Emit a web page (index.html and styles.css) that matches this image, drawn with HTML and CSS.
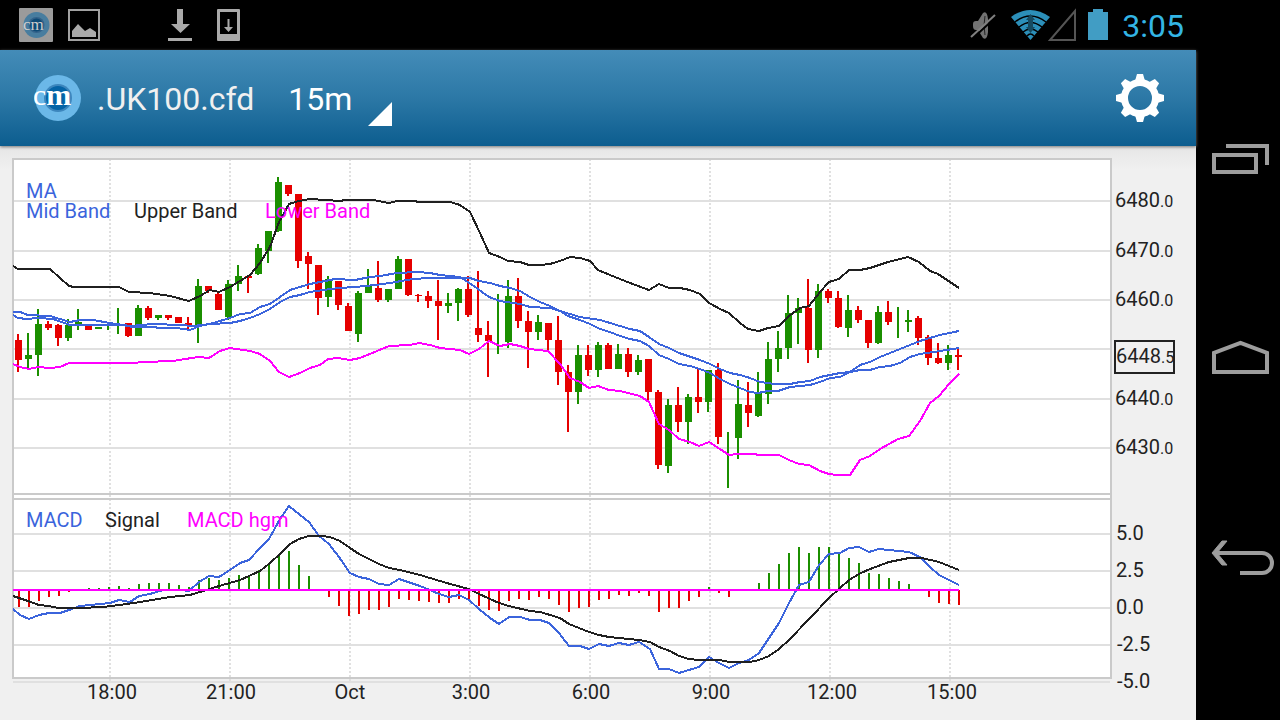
FILE: index.html
```html
<!DOCTYPE html>
<html lang="en">
<head>
<meta charset="utf-8">
<title>.UK100.cfd 15m</title>
<link rel="stylesheet" href="styles.css">
</head>
<body>
<div class="device">
  <div class="screen">
    <div class="status">
      <svg class="icon" viewBox="0 0 36 50" aria-hidden="true">
        <rect x="1" y="8" width="34" height="34" rx="1" fill="#9b9b9b"/>
        <circle cx="18.500" cy="25" r="13" fill="#487d9f"/>
        <circle cx="18.500" cy="25" r="8" fill="#33628a"/>
        <circle cx="18.500" cy="25" r="6.500" fill="#0d4a76"/>
        <text class="logo-small" x="5" y="30">cm</text>
      </svg>
      <svg class="icon" viewBox="0 0 36 50" aria-hidden="true">
        <rect x="3" y="10" width="30" height="30" fill="none" stroke="#a2a2a2" stroke-width="2"/>
        <path d="M6 37V31L12 24L19 31L24 28L30 32V37Z" fill="#aaa"/>
      </svg>
      <svg class="icon icon-after-gap" viewBox="0 0 36 50" aria-hidden="true">
        <path d="M15 9H21V24H28L18.500 33L9 24H15ZM6 38H30V41H6Z" fill="#aaa"/>
      </svg>
      <svg class="icon" viewBox="0 0 36 50" aria-hidden="true">
        <path fill-rule="evenodd" d="M8 9H29Q30 9 30 10V40Q30 41 29 41H8Q7 41 7 40V10Q7 9 8 9ZM10 12V34H27V12Z" fill="#aaa"/>
        <path d="M17.500 19H19.500V27H23L18.500 32L14 27H17.500Z" fill="#aaa"/>
      </svg>
      <div class="status-end">
        <svg class="icon" viewBox="0 0 36 50" aria-hidden="true">
          <path d="M7 24Q7 21 10 21H12L17 13Q21 10 22 19V32Q21 41 17 38L12 30H10Q7 30 7 26Z" fill="#727272"/>
          <path d="M19 16Q17 25 19 35" fill="none" stroke="#222" stroke-width="1"/>
          <path d="M6 39L30 17" stroke="#000" stroke-width="2"/>
          <path d="M5 37L29 15" stroke="#808080" stroke-width="2"/>
        </svg>
        <svg class="icon-wide" viewBox="0 0 72 50" aria-hidden="true">
          <path d="M3 17Q22 3 42 17L22.500 40Z" fill="#2c8fb9"/>
          <path d="M7 22Q22.500 10 38 22M11 27Q22.500 18 34 27M15 32Q22.500 26 30 32M19 36Q22.500 32 26 36" fill="none" stroke="#000" stroke-width="1.500"/>
          <path d="M22.500 14L27 20H25V27H27L22.500 33L18 27H20V20H18Z" fill="#164a60"/>
          <path d="M42 40H67V11Z" fill="none" stroke="#555" stroke-width="2"/>
        </svg>
        <svg class="icon-slim" viewBox="0 0 24 50" aria-hidden="true">
          <path d="M7 9H17V12H22V40H2V12H7Z" fill="#419dc4"/>
        </svg>
        <span class="clock">3:05</span>
      </div>
    </div>
    <header class="bar">
      <svg class="logo" viewBox="0 0 48 48" aria-hidden="true">
        <circle cx="24" cy="24" r="23" fill="#6bb8e8"/>
        <circle cx="24" cy="24" r="14" fill="#3c86bd"/>
        <circle cx="24" cy="24" r="12" fill="#0564a6"/>
        <text class="logo-large" x="-1" y="31">c<tspan class="logo-bold">m</tspan></text>
      </svg>
      <h1 class="symbol">.UK100.cfd</h1>
      <label class="interval">
        <select class="interval-select" aria-label="Interval"><option>15m</option><option>30m</option><option>1h</option></select>
        <svg class="corner" viewBox="0 0 24 24" aria-hidden="true"><path d="M0 24L24 0V24Z" fill="#fff"/></svg>
      </label>
      <button class="settings" aria-label="Settings">
        <svg class="gear" viewBox="-24 -24 48 48" aria-hidden="true">
          <circle r="15.500" fill="none" stroke="#fff" stroke-width="7"/>
          <g id="teeth" fill="#fff"></g>
        </svg>
      </button>
    </header>
    <main class="content">
      <svg class="chart" viewBox="0 146 1196 574" preserveAspectRatio="xMinYMin meet" role="img" aria-label="UK100 price chart with MACD">
        <rect x="13" y="159" width="1098" height="519" fill="#fff"/>
        <g id="grid" class="grid"></g>
        <path class="frame" d="M13 159H1111V678H13ZM13 494H1111M13 499H1111"/>
        <g id="candles" class="crisp"></g>
        <g id="histogram" class="crisp"></g>
        <g id="lines" class="lines"></g>
        <g class="labels">
          <text class="blue" x="26" y="198">MA</text>
          <text class="blue" x="26" y="218">Mid Band</text>
          <text x="134" y="218">Upper Band</text>
          <text class="pink" x="265" y="218">Lower Band</text>
          <text class="blue" x="26" y="527">MACD</text>
          <text x="105" y="527">Signal</text>
          <text class="pink" x="187" y="527">MACD hgm</text>
          <text x="1115" y="207">6480<tspan class="minor">.0</tspan></text>
          <text x="1115" y="257">6470<tspan class="minor">.0</tspan></text>
          <text x="1115" y="306">6460<tspan class="minor">.0</tspan></text>
          <text x="1115" y="405">6440<tspan class="minor">.0</tspan></text>
          <text x="1115" y="454">6430<tspan class="minor">.0</tspan></text>
          <rect class="price" x="1115" y="341" width="59" height="32"/>
          <text x="1116" y="363">6448<tspan class="minor">.5</tspan></text>
          <text x="1116" y="540">5.0</text>
          <text x="1116" y="577">2.5</text>
          <text x="1116" y="614">0.0</text>
          <text x="1117" y="651">-2.5</text>
          <text x="1117" y="688">-5.0</text>
        </g>
        <g class="labels times">
          <text x="112" y="699">18:00</text>
          <text x="231" y="699">21:00</text>
          <text x="350" y="699">Oct</text>
          <text x="471" y="699">3:00</text>
          <text x="591" y="699">6:00</text>
          <text x="711" y="699">9:00</text>
          <text x="832" y="699">12:00</text>
          <text x="952" y="699">15:00</text>
        </g>
      </svg>
    </main>
  </div>
  <nav class="nav" aria-label="System">
    <button class="nav-button" aria-label="Recent apps">
      <svg class="nav-icon" viewBox="0 0 84 60" aria-hidden="true"><path d="M18 25H60V42H18ZM30 16H71V35" fill="none" stroke="#9d9d9d" stroke-width="4"/></svg>
    </button>
    <button class="nav-button" aria-label="Home">
      <svg class="nav-icon" viewBox="0 0 84 60" aria-hidden="true"><path d="M18 44V25L44.500 15L71 25V44Z" fill="none" stroke="#9d9d9d" stroke-width="4"/></svg>
    </button>
    <button class="nav-button" aria-label="Back">
      <svg class="nav-icon" viewBox="0 0 84 60" aria-hidden="true"><path d="M19 27H66A10 10 0 0 1 66 47H44" fill="none" stroke="#9d9d9d" stroke-width="4"/><path d="M26 15H31L21 27L31 39H26L16 27Z" fill="#9d9d9d" stroke="#9d9d9d"/></svg>
    </button>
  </nav>
</div>
<script src="chart.js"></script>
</body>
</html>
```
FILE: styles.css
```css
* { box-sizing: border-box; }
body { margin: 0; background: #000; font-family: Roboto, "Liberation Sans", sans-serif; }
button { border: 0; padding: 0; background: none; }
svg { display: block; }

.device { display: flex; min-height: 100vh; background: #000; }
.screen { flex: 1; min-width: 0; display: flex; flex-direction: column; }

.status { display: flex; align-items: center; gap: 12px; height: 50px; padding: 0 12px 0 18px; }
.icon { width: 36px; height: 50px; }
.icon-after-gap { margin-left: 48px; }
.icon-wide { width: 72px; height: 50px; }
.icon-slim { width: 24px; height: 50px; }
.status-end { display: flex; align-items: center; gap: 6px; margin-left: auto; }
.clock { margin-left: 6px; padding-top: 2px; font-size: 32px; line-height: 48px; color: #33b5e5; }
.logo-small { font: 17px "Liberation Serif", serif; fill: #ccc; }

.bar {
  position: relative;
  display: flex;
  align-items: center;
  height: 96px;
  padding: 0 32px 0 34px;
  background: linear-gradient(#448cb8, #2c78a6 50%, #0c5d8f);
  box-shadow: 0 1px 3px #777;
}
.logo { width: 48px; height: 48px; overflow: hidden; }
.logo-large { font: 30px "Liberation Serif", serif; fill: #fff; }
.logo-bold { font-weight: 700; }
.symbol { margin: 0 0 0 15px; padding-top: 2px; font-size: 32px; font-weight: 400; line-height: 48px; color: #f0f0f0; }
.interval { display: flex; align-items: center; margin-left: 34px; }
.interval-select {
  width: 80px;
  height: 50px;
  padding: 2px 0 0;
  border: 0;
  appearance: none;
  background: none;
  font: 32px Roboto, "Liberation Sans", sans-serif;
  color: #fff;
}
.corner { width: 24px; height: 24px; margin-top: 32px; }
.settings { margin-left: auto; }
.gear { width: 48px; height: 48px; }

.content { flex: 1; background: linear-gradient(#e6e6e6, #f0f0f0 24px); }
.chart { width: 100%; height: auto; }
.grid { stroke: #e0e0e0; stroke-width: 2; shape-rendering: crispEdges; }
.dotted { stroke-dasharray: 2 2; }
.frame { fill: none; stroke: #cacaca; stroke-width: 2; shape-rendering: crispEdges; }
.crisp { shape-rendering: crispEdges; }
.lines { fill: none; stroke-width: 2; shape-rendering: crispEdges; }
.up { fill: #1b8f00; }
.down { fill: #e60000; }
.line-blue { stroke: #3b64dc; }
.line-black { stroke: #202020; }
.line-pink { stroke: #f0f; }
.labels { font-size: 20px; fill: #222; }
.minor { font-size: 16px; }
.times { text-anchor: middle; }
.blue { fill: #3b64dc; }
.pink { fill: #f0f; }
.price { fill: #f0f0f0; stroke: #222; stroke-width: 2; }

.nav { display: flex; flex-direction: column; width: 84px; padding: 61px 0 65px; }
.nav-button { flex: 1; display: flex; align-items: center; }
.nav-icon { width: 84px; height: 60px; }
```
FILE: chart.js
```js
const NS = "http://www.w3.org/2000/svg";
const byId = (id) => document.getElementById(id);

function add(parent, tag, attrs) {
  const node = document.createElementNS(NS, tag);
  for (const key in attrs) node.setAttribute(key, attrs[key]);
  parent.appendChild(node);
}

// Gear teeth
for (let a = 0; a < 360; a += 45) {
  add(byId("teeth"), "path", { d: "M-5 -17L-3 -24H3L5 -17Z", transform: `rotate(${a})` });
}

// Grid
for (const y of [201, 251, 300, 349, 399, 448, 534, 571, 608, 645, 682]) {
  add(byId("grid"), "path", { d: `M13 ${y}H1110` });
}
for (let x = 110; x <= 950; x += 120) {
  add(byId("grid"), "path", { d: `M${x} 159V682`, class: "dotted" });
}

// Candles: direction, wick top, body top, body bottom, wick bottom
const candles = `r 334 340 360 372;g 333 355 359 369;g 309 324 355 376;r 321 324 328 330;r 324 325 338 346;
g 319 325 338 341;g 309 322 325 330;r 326 326 330 330;g 327 327 329 329;g 324 0 0 330;g 308 0 0 334;
r 323 323 336 337;g 305 308 336 336;r 306 308 318 320;g 315 315 318 320;r 315 315 318 320;r 317 317 323 323;
r 317 323 326 329;g 279 286 325 343;r 286 286 291 293;r 293 294 310 310;g 280 284 317 320;g 265 276 284 291;
r 275 276 278 293;g 244 248 274 275;g 231 231 251 263;g 177 182 231 232;r 185 185 194 196;r 194 194 261 268;
r 252 256 264 289;r 265 265 298 315;g 276 279 297 307;r 281 281 305 310;r 303 306 331 331;g 291 293 334 342;
g 269 286 293 293;r 261 288 300 302;g 289 289 300 302;g 256 259 289 289;r 259 259 295 296;r 294 295 296 302;
r 291 296 301 308;r 280 301 306 340;g 293 303 306 313;g 288 289 303 321;r 276 289 315 317;r 271 328 335 342;
r 321 335 341 377;g 294 0 0 354;g 280 296 342 348;r 278 296 321 328;r 311 321 332 368;g 315 322 332 340;
r 323 323 340 352;r 316 340 372 385;r 365 372 392 432;g 345 355 392 404;r 345 355 370 376;g 342 345 370 377;
r 343 345 369 369;g 344 354 369 369;r 348 354 372 377;g 355 360 372 375;r 359 359 392 402;r 390 392 465 469;
g 399 405 466 473;r 387 405 422 432;g 394 397 422 444;r 369 397 402 413;g 370 370 402 412;r 363 370 437 444;
g 432 0 0 488;g 380 404 438 459;r 382 405 413 427;g 372 393 416 417;g 342 359 394 404;g 331 348 359 372;
g 295 313 348 359;g 298 308 313 344;r 279 308 350 363;g 284 291 350 358;r 289 291 298 303;r 291 298 327 328;
g 295 310 328 337;r 306 310 320 323;r 320 320 343 348;g 306 312 343 344;r 301 312 322 325;g 307 0 0 338;
g 310 320 322 332;r 316 318 338 345;r 335 337 358 365;r 343 358 363 364;g 345 355 363 370;r 348 355 357 370`;

candles.split(";").forEach((row, i) => {
  const [dir, ...v] = row.trim().split(" ");
  const [high, top, bottom, low] = v.map(Number);
  const x = 18 + i * 10;
  const cls = dir === "g" ? "up" : "down";
  add(byId("candles"), "rect", { class: cls, x: x - 1, y: high, width: 2, height: low - high });
  if (bottom) add(byId("candles"), "rect", { class: cls, x: x - 3, y: top, width: 7, height: bottom - top });
});

// MACD histogram: end of each bar, baseline at 590
const bars = [607, 607, 601, 597, 596, 592, 0, 588, 588, 587, 586, 588, 584, 583, 583, 583, 585, 587, 580, 578, 580,
  578, 575, 576, 570, 565, 554, 551, 565, 576, 0, 597, 606, 616, 614, 610, 610, 607, 599, 600, 601, 602, 603, 603,
  599, 601, 606, 610, 611, 601, 599, 600, 597, 599, 605, 612, 608, 607, 600, 599, 595, 596, 593, 596, 612, 608,
  608, 601, 597, 587, 593, 597, 0, 0, 583, 573, 564, 553, 547, 553, 547, 547, 553, 558, 563, 573, 574, 578, 581,
  584, 0, 597, 603, 604, 605];
bars.forEach((y, i) => {
  if (!y) return;
  add(byId("histogram"), "rect", {
    class: y < 590 ? "up" : "down", x: 18 + i * 10, y: Math.min(y, 590), width: 2, height: Math.abs(y - 590)
  });
});

const series = [
  ["line-blue", `13,312 20,312 28,315 50,316 60,319 70,322 80,320 93,320 110,323 123,325 130,326 153,324 180,325 193,326
    210,324 230,323 240,321 250,318 260,314 270,309 280,302 290,297 300,295 310,292 330,289 340,288 355,287 375,285
    390,283 413,279 430,278 470,278 479,281 490,283 500,286 510,288 520,291 530,297 540,302 550,306 560,311 568,316
    580,320 590,324 600,329 610,332 620,336 630,339 640,341 649,346 659,355 669,359 679,364 690,366 700,369 710,373
    720,379 730,384 740,388 750,392 758,393 768,391 778,391 790,387 800,386 810,385 820,382 830,378 840,377 850,372
    860,365 870,362 880,357 890,353 900,349 910,345 920,341 930,338 940,335 959,331`],
  ["line-blue", `13,315 18,318 27,319 38,318 53,319 70,325 123,325 133,327 153,327 160,328 177,328 190,330 200,326 213,323
    230,318 240,314 250,313 260,307 270,304 280,297 290,290 300,287 310,284 320,282 335,279 355,280 370,277 380,276
    397,273 418,272 430,273 440,275 460,277 468,282 478,289 489,297 500,301 520,304 530,307 550,308 560,311 570,314
    580,317 600,320 610,323 630,329 640,331 649,337 659,344 669,348 679,353 700,360 710,364 720,369 730,373 740,375
    750,378 760,382 775,384 790,384 800,382 810,381 820,377 830,375 840,373 850,372 860,370 870,370 880,367 890,366
    900,363 910,357 920,354 940,351 959,348`],
  ["line-black", `13,266 18,269 50,269 60,278 69,286 74,287 119,287 129,292 150,293 170,296 189,301 200,296 210,290 219,292
    230,287 240,281 250,275 260,263 270,247 279,222 289,204 299,201 310,199 325,200 340,201 345,200 373,200 389,203
    397,201 413,201 420,202 450,202 460,205 470,212 480,233 489,253 500,257 508,261 520,262 529,265 540,265 550,264
    560,261 570,257 580,258 590,261 598,270 610,275 630,283 649,290 659,284 669,288 680,288 690,290 700,294 709,303
    720,309 729,313 740,323 748,329 759,331 768,328 779,326 789,316 800,308 809,306 820,292 829,282 839,279 849,270
    860,270 870,268 888,262 908,257 919,262 930,271 938,274 959,288`],
  ["line-pink", `13,364 20,367 29,369 38,367 50,368 60,367 69,363 133,363 143,362 173,361 198,357 209,358 220,351 230,348
    250,351 260,354 270,361 279,372 289,377 300,373 310,368 320,365 328,359 338,358 350,360 360,358 377,351 389,346
    410,345 419,343 430,345 440,348 460,350 469,354 479,349 489,341 500,346 510,344 520,346 529,349 548,351 560,364
    570,378 580,382 589,388 598,386 609,390 620,391 640,396 649,402 659,424 669,430 679,439 690,442 699,446 709,442
    720,449 729,455 737,454 753,454 760,455 779,455 789,460 799,464 809,465 820,471 829,474 837,475 850,475 860,460
    870,456 880,449 898,439 909,436 920,421 930,403 939,396 949,384 959,374`],
  ["line-blue", `13,609 20,615 29,619 39,615 49,613 60,613 69,610 80,606 100,604 110,603 119,600 130,602 139,596 150,594
    163,590 180,590 189,591 199,582 209,576 219,577 230,570 240,563 249,560 260,548 269,539 280,519 289,506 300,515
    309,522 319,536 329,544 339,557 350,573 359,577 369,579 379,584 389,585 399,579 420,586 430,590 439,594 449,597
    459,595 469,600 479,609 490,618 499,624 509,617 520,617 530,620 540,620 549,623 559,633 569,646 580,646 589,649
    599,644 609,646 619,643 629,645 639,642 650,649 659,669 669,669 679,673 699,667 709,657 719,663 729,668 739,663
    749,660 759,653 779,623 789,603 799,585 809,582 819,565 829,554 840,553 849,548 859,547 869,552 879,549 909,552
    920,557 929,566 939,575 959,585`],
  ["line-black", `13,596 28,601 39,605 49,606 58,608 80,608 103,607 127,604 140,602 170,597 190,595 203,591 219,586 240,580
    260,571 270,563 280,554 290,544 299,539 309,536 322,536 330,537 340,541 350,548 359,554 379,564 389,568 400,570
    420,575 450,584 469,589 479,594 499,603 509,606 530,611 540,612 560,618 569,624 589,632 599,635 609,637 639,640
    650,642 659,647 670,651 679,656 689,659 699,660 720,660 729,662 750,662 759,660 769,656 779,649 789,640 810,618
    830,597 839,589 849,580 859,574 870,569 889,562 909,558 922,558 939,562 959,570`],
  ["line-pink", "13,590 959,590"]
];
for (const [cls, points] of series) add(byId("lines"), "polyline", { class: cls, points });
```
